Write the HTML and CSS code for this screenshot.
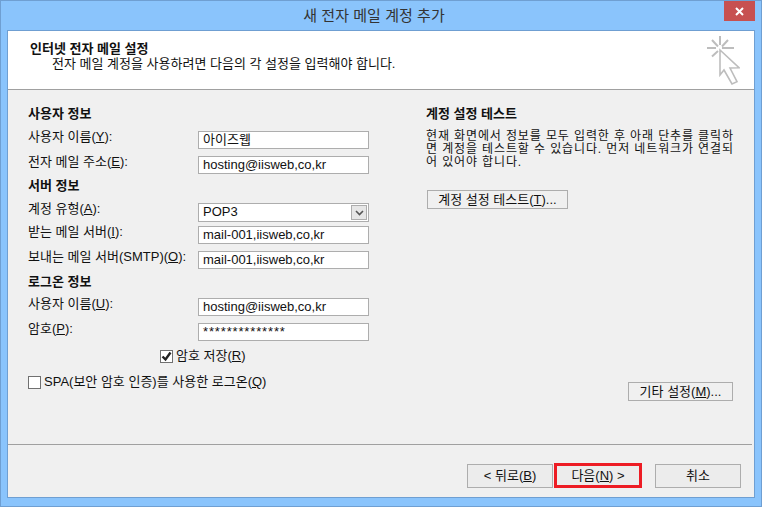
FILE: index.html
```html
<!DOCTYPE html>
<html lang="ko">
<head>
<meta charset="utf-8">
<title>새 전자 메일 계정 추가</title>
<link rel="stylesheet" href="styles.css">
</head>
<body>
<div class="window">
  <div class="titlebar">
    <span class="title">새 전자 메일 계정 추가</span>
    <div class="close"><svg width="9" height="9" viewBox="0 0 9 9"><path d="M1 1L8 8M8 1L1 8" stroke="#fff" stroke-width="2"/></svg></div>
  </div>
  <div class="client">
    <header class="head">
      <div class="head-text">
        <div class="bold">인터넷 전자 메일 설정</div>
        <div class="sub">전자 메일 계정을 사용하려면 다음의 각 설정을 입력해야 합니다.</div>
      </div>
      <svg class="wizard" width="36" height="50" viewBox="0 0 36 50" fill="none" stroke="#bdbdbd" stroke-width="2">
        <path d="M16 0V9M3 12H12M18 12H30M8 4L14 10.5M24 4L18 10.5M8 20.5L14 15"/>
        <path d="M16 14V39L20 34L28 48L33 45.7L26 32L35 31.7Z" stroke-width="1.6"/>
      </svg>
    </header>
    <main class="body">
      <section class="left">
        <h2 class="bold sec first">사용자 정보</h2>
        <div class="row"><label>사용자 이름(<u>Y</u>):</label><div class="field">아이즈웹</div></div>
        <div class="row"><label>전자 메일 주소(<u>E</u>):</label><div class="field">hosting@iisweb,co,kr</div></div>
        <h2 class="bold sec server">서버 정보</h2>
        <div class="row combo-row"><label>계정 유형(<u>A</u>):</label><div class="field combo">POP3<span class="arrow"><svg width="9" height="6" viewBox="0 0 9 6"><path d="M1 1L4.5 4.5L8 1" fill="none" stroke="#555" stroke-width="1.6"/></svg></span></div></div>
        <div class="row after-combo"><label>받는 메일 서버(<u>I</u>):</label><div class="field">mail-001,iisweb,co,kr</div></div>
        <div class="row"><label>보내는 메일 서버(SMTP)(<u>O</u>):</label><div class="field">mail-001,iisweb,co,kr</div></div>
        <h2 class="bold sec logon">로그온 정보</h2>
        <div class="row"><label>사용자 이름(<u>U</u>):</label><div class="field">hosting@iisweb,co,kr</div></div>
        <div class="row"><label>암호(<u>P</u>):</label><div class="field pw">**************</div></div>
        <div class="check save"><span class="box"><svg width="11" height="11" viewBox="0 0 11 11"><path d="M1.5 5.5L4.5 8.5L9.5 1.5" fill="none" stroke="#222" stroke-width="2.4"/></svg></span>암호 저장(<u>R</u>)</div>
        <div class="check spa"><span class="box"></span>SPA(보안 암호 인증)를 사용한 로그온(<u>Q</u>)</div>
      </section>
      <section class="right">
        <h2 class="bold sec first">계정 설정 테스트</h2>
        <p class="desc">현재 화면에서 정보를 모두 입력한 후 아래 단추를 클릭하<br>면 계정을 테스트할 수 있습니다. 먼저 네트워크가 연결되<br>어 있어야 합니다.</p>
        <button class="btn test">계정 설정 테스트(<u>T</u>)...</button>
        <button class="btn more">기타 설정(<u>M</u>)...</button>
      </section>
    </main>
    <footer class="foot">
      <button class="btn nav">&lt; 뒤로(<u>B</u>)</button>
      <button class="btn nav next">다음(<u>N</u>) &gt;</button>
      <button class="btn nav cancel">취소</button>
    </footer>
  </div>
</div>
</body>
</html>
```
FILE: styles.css
```css
* { box-sizing: border-box; }
html, body { margin: 0; padding: 0; }
body {
  width: 762px;
  height: 507px;
  overflow: hidden;
  font: 13px/14px "Liberation Sans", "Noto Sans CJK KR", sans-serif;
  color: #111;
}
.window {
  width: 762px;
  height: 507px;
  background: #8ac4fc;
  border: 1px solid #6f9fd2;
  display: flex;
  flex-direction: column;
}
.titlebar {
  height: 29px;
  flex: none;
  display: flex;
  justify-content: center;
  align-items: center;
  position: relative;
  padding-right: 14px;
}
.title { font-size: 15px; color: #333; letter-spacing: .05px; }
.close {
  position: absolute;
  right: 6px;
  top: 0;
  width: 31px;
  height: 20px;
  background: #c75050;
  display: flex;
  align-items: center;
  justify-content: center;
}
.client {
  margin: 0 6px 8px 6px;
  flex: 1;
  background: #f0f0f0;
  border: 1px solid #6f9fd2;
  display: flex;
  flex-direction: column;
}
.head {
  height: 59px;
  flex: none;
  background: #fff;
  border-bottom: 1px solid #a0a0a0;
  display: flex;
  justify-content: space-between;
  padding: 11px 14px 0 22px;
}
.head-text { display: flex; flex-direction: column; }
.sub { padding-left: 22px; margin-top: 1px; }
.wizard { margin-top: -6px; }
.bold { font-weight: 700; font-size: 13px; margin: 0; }
.body { flex: 1; display: flex; padding-top: 15px; }
.left { width: 418px; flex: none; padding-left: 20px; display: flex; flex-direction: column; }
.right { flex: 1; position: relative; }
.sec { height: 14px; }
.sec.first { margin-top: 2px; }
.sec.server { margin-top: 5px; }
.sec.logon { margin-top: 6px; }
.row {
  height: 18px;
  margin-top: 7px;
  display: flex;
  justify-content: space-between;
  width: 341px;
}
.sec + .row { margin-top: 10px; }
.sec.logon + .row { margin-top: 9px; }
.row.after-combo { margin-top: 4px; }
.row label { display: block; margin-top: -1px; }
.field {
  width: 171px;
  height: 18px;
  background: #fff;
  border: 1px solid #adadad;
  padding: 1px 4px;
  line-height: 14px;
  color: #111;
}
.pw { letter-spacing: .85px; }
.combo-row { height: 19px; }
.combo { height: 19px; position: relative; padding-left: 4px; }
.arrow {
  position: absolute;
  right: 1px;
  top: 1px;
  width: 16px;
  height: 15px;
  background: #e6e6e6;
  border: 1px solid #adadad;
  display: flex;
  align-items: center;
  justify-content: center;
}
.check { display: flex; align-items: center; }
.box {
  width: 13px;
  height: 13px;
  background: #fff;
  border: 1px solid #707070;
  margin-right: 3px;
  display: flex;
  align-items: center;
  justify-content: center;
}
.save { margin: 8px 0 0 132px; }
.spa { margin-top: 12px; }
.desc {
  margin: 9px 0 0;
  font-size: 12px;
  line-height: 13px;
  letter-spacing: .88px;
  width: 325px;
  white-space: nowrap;
}
.btn {
  font: inherit;
  color: #111;
  background: #f0f0f0;
  border: 1px solid #adadad;
  padding: 0;
  display: block;
}
.test { width: 141px; height: 19px; margin: 21px 0 0 1px; }
.more { position: absolute; left: 202px; top: 277px; width: 105px; height: 19px; }
.foot {
  height: 53px;
  flex: none;
  border-top: 1px solid #a0a0a0;
  margin-right: 2px;
  display: flex;
  padding: 19px 0 0 459px;
}
.nav { width: 86px; height: 24px; background: #ececec; }
.next { width: 88px; height: 25px; margin: -1px 13px 0 1px; border: 3px solid #ed1c24; }
```
